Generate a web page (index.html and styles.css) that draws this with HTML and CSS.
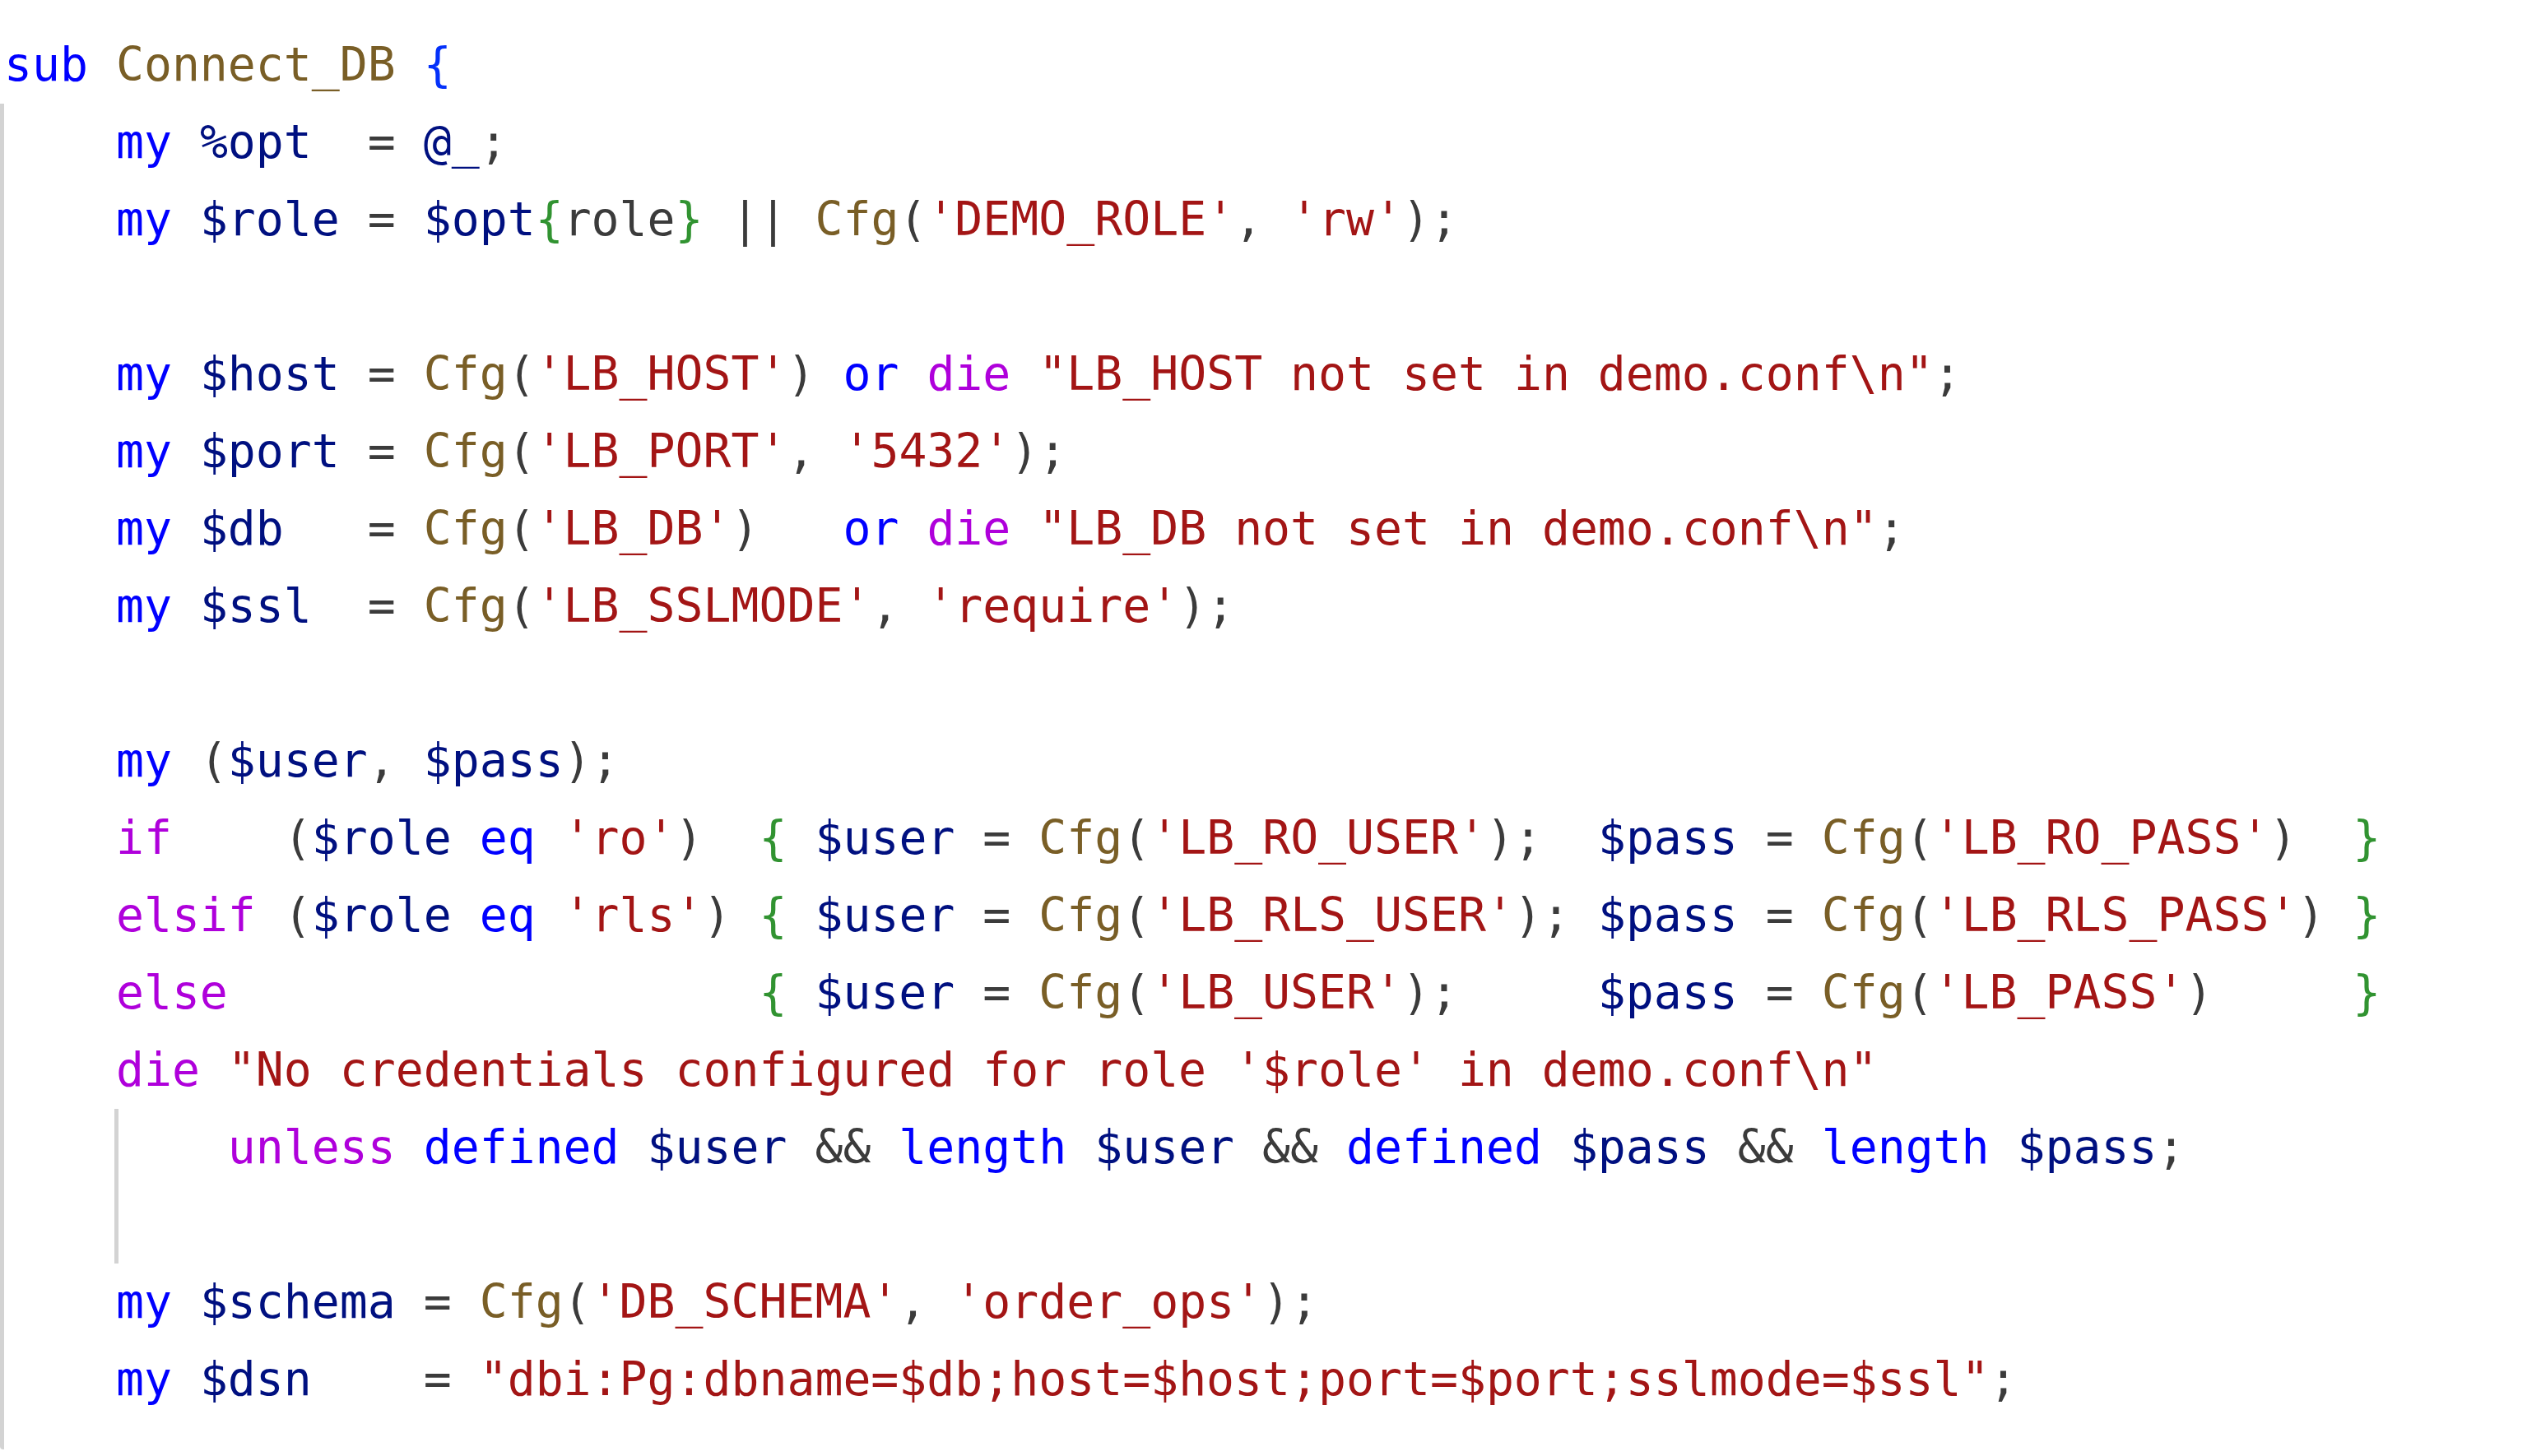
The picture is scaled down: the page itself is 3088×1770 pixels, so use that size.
FILE: index.html
```html
<!DOCTYPE html>
<html lang="en">
<head>
<meta charset="utf-8">
<title>Connect_DB</title>
<link rel="stylesheet" href="styles.css">
</head>
<body>
<div class="editor">
  <div class="line head"><span class="k">sub</span> <span class="f">Connect_DB</span> <span class="b1">{</span></div>
  <div class="body">
    <div class="line">    <span class="k">my</span> <span class="v">%opt</span>  = <span class="v">@_</span>;</div>
    <div class="line">    <span class="k">my</span> <span class="v">$role</span> = <span class="v">$opt</span><span class="b2">{</span>role<span class="b2">}</span> || <span class="f">Cfg</span>(<span class="s">'DEMO_ROLE'</span>, <span class="s">'rw'</span>);</div>
    <div class="line"></div>
    <div class="line">    <span class="k">my</span> <span class="v">$host</span> = <span class="f">Cfg</span>(<span class="s">'LB_HOST'</span>) <span class="k">or</span> <span class="c">die</span> <span class="s">"LB_HOST not set in demo.conf\n"</span>;</div>
    <div class="line">    <span class="k">my</span> <span class="v">$port</span> = <span class="f">Cfg</span>(<span class="s">'LB_PORT'</span>, <span class="s">'5432'</span>);</div>
    <div class="line">    <span class="k">my</span> <span class="v">$db</span>   = <span class="f">Cfg</span>(<span class="s">'LB_DB'</span>)   <span class="k">or</span> <span class="c">die</span> <span class="s">"LB_DB not set in demo.conf\n"</span>;</div>
    <div class="line">    <span class="k">my</span> <span class="v">$ssl</span>  = <span class="f">Cfg</span>(<span class="s">'LB_SSLMODE'</span>, <span class="s">'require'</span>);</div>
    <div class="line"></div>
    <div class="line">    <span class="k">my</span> (<span class="v">$user</span>, <span class="v">$pass</span>);</div>
    <div class="line">    <span class="c">if</span>    (<span class="v">$role</span> <span class="k">eq</span> <span class="s">'ro'</span>)  <span class="b2">{</span> <span class="v">$user</span> = <span class="f">Cfg</span>(<span class="s">'LB_RO_USER'</span>);  <span class="v">$pass</span> = <span class="f">Cfg</span>(<span class="s">'LB_RO_PASS'</span>)  <span class="b2">}</span></div>
    <div class="line">    <span class="c">elsif</span> (<span class="v">$role</span> <span class="k">eq</span> <span class="s">'rls'</span>) <span class="b2">{</span> <span class="v">$user</span> = <span class="f">Cfg</span>(<span class="s">'LB_RLS_USER'</span>); <span class="v">$pass</span> = <span class="f">Cfg</span>(<span class="s">'LB_RLS_PASS'</span>) <span class="b2">}</span></div>
    <div class="line">    <span class="c">else</span>                   <span class="b2">{</span> <span class="v">$user</span> = <span class="f">Cfg</span>(<span class="s">'LB_USER'</span>);     <span class="v">$pass</span> = <span class="f">Cfg</span>(<span class="s">'LB_PASS'</span>)     <span class="b2">}</span></div>
    <div class="line">    <span class="c">die</span> <span class="s">"No credentials configured for role '$role' in demo.conf\n"</span></div>
    <div class="wrap">
      <div class="line"><span class="c">unless</span> <span class="k">defined</span> <span class="v">$user</span> &amp;&amp; <span class="k">length</span> <span class="v">$user</span> &amp;&amp; <span class="k">defined</span> <span class="v">$pass</span> &amp;&amp; <span class="k">length</span> <span class="v">$pass</span>;</div>
      <div class="line"></div>
    </div>
    <div class="line">    <span class="k">my</span> <span class="v">$schema</span> = <span class="f">Cfg</span>(<span class="s">'DB_SCHEMA'</span>, <span class="s">'order_ops'</span>);</div>
    <div class="line">    <span class="k">my</span> <span class="v">$dsn</span>    = <span class="s">"dbi:Pg:dbname=$db;host=$host;port=$port;sslmode=$ssl"</span>;</div>
  </div>
</div>
</body>
</html>
```

FILE: styles.css
```css
html, body {
  margin: 0;
  padding: 0;
  background: #ffffff;
}

body {
  width: 3088px;
  height: 1770px;
  overflow: hidden;
}

.editor {
  font-family: "DejaVu Sans Mono", monospace;
  font-size: 56.44px;
  line-height: 94px;
  color: #3b3b3b;
  padding-top: 32px;
}

.line {
  height: 94px;
  white-space: pre;
}

.head {
  padding-left: 5px;
}

.body {
  border-left: 5px solid #d3d3d3;
  border-bottom-left-radius: 4px;
  padding-bottom: 38px;
}

.wrap {
  margin-left: calc(4ch - 2px);
  border-left: 5px solid #d3d3d3;
  padding-left: calc(4ch - 3px);
}

.k { color: #0000ff; }
.c { color: #af00db; }
.v { color: #001080; }
.f { color: #795e26; }
.s { color: #a31515; }
.b1 { color: #0431fa; }
.b2 { color: #319331; }
```
